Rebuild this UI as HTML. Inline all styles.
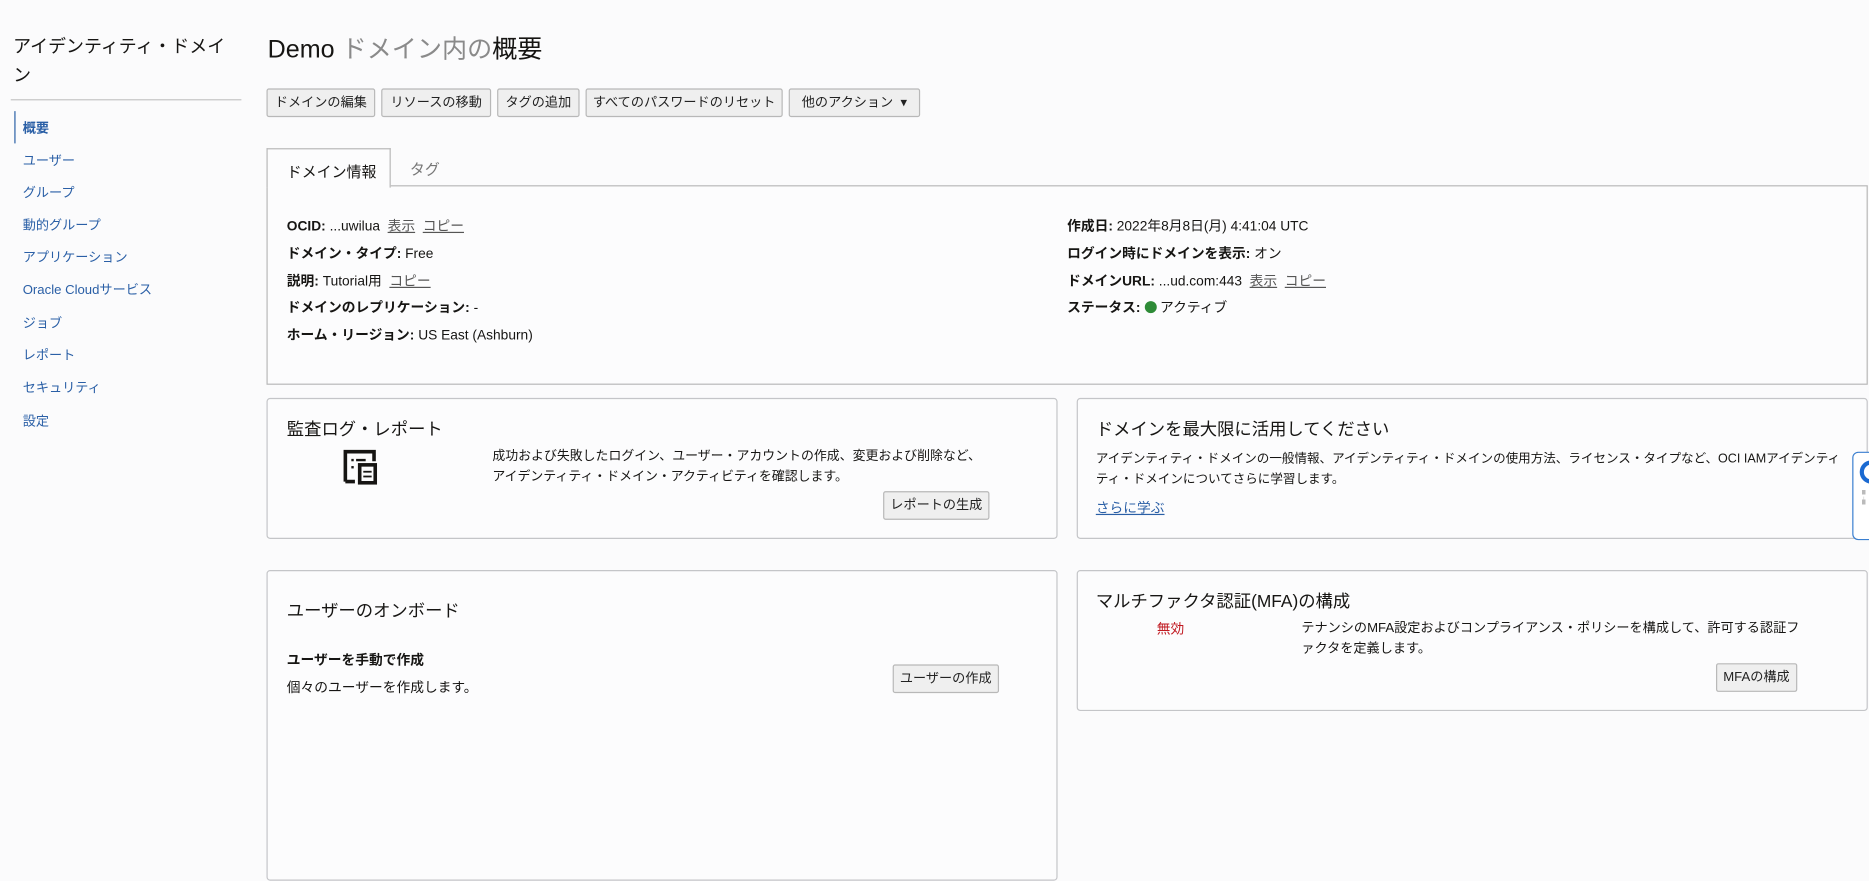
<!DOCTYPE html>
<html><head><meta charset="utf-8"><style>
*{box-sizing:border-box;margin:0;padding:0}
body{width:1869px;height:727px;overflow:hidden;background:#fbfbfc;font-family:"Liberation Sans","Noto Sans CJK JP",sans-serif;color:#161513;font-size:11.5px;position:relative}
#w{position:absolute;left:0;top:0;width:1564px;height:609px;transform:scale(1.195);transform-origin:0 0}
.a{position:absolute;white-space:nowrap}
.nav{color:#2a5fa6;font-size:11px;left:19px}
.btn{position:absolute;top:74px;height:24px;border:1px solid #b8b8b8;border-radius:2px;background:#efefef;font-size:11px;line-height:22px;text-align:center;color:#222;white-space:nowrap;overflow:hidden}
.box{position:absolute;border:1px solid #c4c5c8;border-radius:3px;background:#fcfcfd}
b{font-weight:bold}
u{color:#555;text-decoration:underline}
.sb{position:absolute;height:24px;border:1px solid #b8b8b8;border-radius:2px;background:#efefef;line-height:22px;padding:0 5px;color:#222;white-space:nowrap;font-size:11px}
.t{font-size:14.5px}
</style></head><body><div id="w">
<div class="a" style="left:11px;top:28px;font-size:15px;line-height:24px;white-space:normal;width:200px">アイデンティティ・ドメイ<br>ン</div>
<div class="a" style="left:9px;top:83px;width:193px;border-top:1px solid #c4c4c4"></div>
<div class="a" style="left:12px;top:93px;height:27px;border-left:1px solid #2a5fa6"></div>
<div class="a nav" style="top:99px;font-weight:bold">概要</div>
<div class="a nav" style="top:126px">ユーザー</div>
<div class="a nav" style="top:153px">グループ</div>
<div class="a nav" style="top:180px">動的グループ</div>
<div class="a nav" style="top:207px">アプリケーション</div>
<div class="a nav" style="top:234px">Oracle Cloudサービス</div>
<div class="a nav" style="top:262px">ジョブ</div>
<div class="a nav" style="top:289px">レポート</div>
<div class="a nav" style="top:316px">セキュリティ</div>
<div class="a nav" style="top:344px">設定</div>

<div class="a" style="left:224px;top:25px;font-size:21px">Demo <span style="color:#8a8a8a">ドメイン内の</span>概要</div>
<div class="btn" style="left:223px;width:91px">ドメインの編集</div>
<div class="btn" style="left:319px;width:92px">リソースの移動</div>
<div class="btn" style="left:416px;width:69px">タグの追加</div>
<div class="btn" style="left:490px;width:165px">すべてのパスワードのリセット</div>
<div class="btn" style="left:660px;width:110px">他のアクション &nbsp;▾</div>

<div class="a" style="left:223px;top:155px;width:1340px;height:167px;border:1px solid #b8b8b8;background:#fcfcfd"></div>
<div class="a" style="left:223px;top:124px;width:104px;height:33px;border:1px solid #b8b8b8;border-bottom:none;background:#fcfcfd;font-size:12.5px;padding:8px 0 0 16px">ドメイン情報</div>
<div class="a" style="left:343px;top:131px;font-size:12.5px;color:#777">タグ</div>

<div class="a" style="left:240px;top:181px"><b>OCID:</b> ...uwilua &nbsp;<u>表示</u> &nbsp;<u>コピー</u></div>
<div class="a" style="left:240px;top:204px"><b>ドメイン・タイプ:</b> Free</div>
<div class="a" style="left:240px;top:227px"><b>説明:</b> Tutorial用 &nbsp;<u>コピー</u></div>
<div class="a" style="left:240px;top:249px"><b>ドメインのレプリケーション:</b> -</div>
<div class="a" style="left:240px;top:272px"><b>ホーム・リージョン:</b> US East (Ashburn)</div>
<div class="a" style="left:893px;top:181px"><b>作成日:</b> 2022年8月8日(月) 4:41:04 UTC</div>
<div class="a" style="left:893px;top:204px"><b>ログイン時にドメインを表示:</b> オン</div>
<div class="a" style="left:893px;top:227px"><b>ドメインURL:</b> ...ud.com:443 &nbsp;<u>表示</u> &nbsp;<u>コピー</u></div>
<div class="a" style="left:893px;top:249px"><b>ステータス:</b> <span style="display:inline-block;width:10px;height:10px;border-radius:50%;background:#2e8b37;vertical-align:-1px"></span> アクティブ</div>

<div class="box" style="left:223px;top:333px;width:662px;height:118px"></div>
<div class="a t" style="left:240px;top:348px">監査ログ・レポート</div>
<svg class="a" style="left:287px;top:376px" width="30" height="30" viewBox="0 0 30 30"><path d="M2 27V2h24v8" fill="none" stroke="#161513" stroke-width="3"/><path d="M2 27h8" stroke="#161513" stroke-width="3"/><rect x="7" y="8" width="2" height="2" fill="#161513"/><rect x="11" y="8" width="8" height="2" fill="#161513"/><rect x="7" y="14" width="2" height="2" fill="#161513"/><rect x="14" y="13" width="13" height="15" fill="none" stroke="#161513" stroke-width="3"/><rect x="17" y="18" width="7" height="1.5" fill="#161513"/><rect x="17" y="22" width="7" height="1.5" fill="#161513"/></svg>
<div class="a" style="left:412px;top:374px;line-height:17px;font-size:10.8px">成功および失敗したログイン、ユーザー・アカウントの作成、変更および削除など、<br>アイデンティティ・ドメイン・アクティビティを確認します。</div>
<div class="sb" style="left:739px;top:411px">レポートの生成</div>

<div class="box" style="left:901px;top:333px;width:662px;height:118px"></div>
<div class="a t" style="left:917px;top:348px">ドメインを最大限に活用してください</div>
<div class="a" style="left:917px;top:376px;line-height:17px;font-size:10.5px">アイデンティティ・ドメインの一般情報、アイデンティティ・ドメインの使用方法、ライセンス・タイプなど、OCI IAMアイデンティ<br>ティ・ドメインについてさらに学習します。</div>
<div class="a" style="left:917px;top:417px;color:#2a5fa6;text-decoration:underline">さらに学ぶ</div>

<div class="box" style="left:223px;top:477px;width:662px;height:260px"></div>
<div class="a t" style="left:240px;top:500px">ユーザーのオンボード</div>
<div class="a" style="left:240px;top:544px;font-weight:bold">ユーザーを手動で作成</div>
<div class="a" style="left:240px;top:567px">個々のユーザーを作成します。</div>
<div class="sb" style="left:747px;top:556px">ユーザーの作成</div>

<div class="box" style="left:901px;top:477px;width:662px;height:118px"></div>
<div class="a t" style="left:917px;top:492px">マルチファクタ認証(MFA)の構成</div>
<div class="a" style="left:968px;top:518px;color:#c01820">無効</div>
<div class="a" style="left:1089px;top:518px;line-height:17px;font-size:11px">テナンシのMFA設定およびコンプライアンス・ポリシーを構成して、許可する認証フ<br>ァクタを定義します。</div>
<div class="sb" style="left:1436px;top:555px">MFAの構成</div>

<div class="a" style="left:1550px;top:378px;width:30px;height:74px;border:1px solid #3a7fd0;border-radius:5px;background:#fff"></div>
<svg class="a" style="left:1555px;top:384px" width="10" height="22"><circle cx="11" cy="11" r="8" fill="none" stroke="#1b6ad1" stroke-width="3.5"/></svg>
<div class="a" style="left:1558px;top:410px;width:6px;height:12px;border-left:3px dotted #bbb"></div>
</div></body></html>
